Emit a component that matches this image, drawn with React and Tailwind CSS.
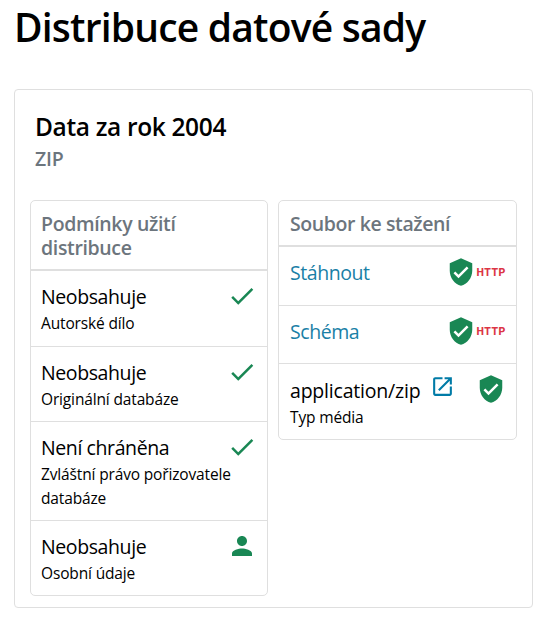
import React from "react";

const Check = () => (
  <svg viewBox="0 0 24 24" className="block size-[30px] shrink-0 fill-[#198754]">
    <path d="M9 16.17 4.83 12l-1.42 1.41L9 19 21 7l-1.41-1.41z" />
  </svg>
);

const Person = () => (
  <svg viewBox="0 0 24 24" className="block size-[30px] shrink-0 fill-[#198754]">
    <path d="M12 12c2.21 0 4-1.79 4-4s-1.79-4-4-4-4 1.79-4 4 1.79 4 4 4zm0 2c-2.67 0-8 1.34-8 4v2h16v-2c0-2.66-5.33-4-8-4z" />
  </svg>
);

const Shield = () => (
  <svg viewBox="0 0 24 24" className="block size-[30px] shrink-0 fill-[#198754]">
    <path d="M12 1 3 5v6c0 5.55 3.84 10.74 9 12 5.16-1.26 9-6.45 9-12V5l-9-4zm-2 16-4-4 1.41-1.41L10 14.17l6.59-6.59L18 9l-8 8z" />
  </svg>
);

const OpenInNew = () => (
  <svg viewBox="0 0 24 24" className="-mt-px block size-[25px] shrink-0 fill-[#007ba7]">
    <path d="M19 19H5V5h7V3H5c-1.11 0-2 .9-2 2v14c0 1.1.89 2 2 2h14c1.1 0 2-.9 2-2v-7h-2v7zM14 3v2h3.59l-9.83 9.83 1.41 1.41L19 6.41V10h2V3h-7z" />
  </svg>
);

const Http = () => (
  <span className="w-[30px] pl-[0.5px] font-['Roboto',sans-serif] text-[10.5px] leading-[31px] font-extrabold tracking-[0.5px] text-[#dc3545]">HTTP</span>
);

function Term({ value, valueClass, label, labelClass, icon, className }) {
  return (
    <div className={"flex justify-between border-t border-[#dfdfdf] px-[10px] pt-[10px] " + className}>
      <div className="whitespace-nowrap">
        <div className={"pt-px text-[19.5px] leading-[30px] " + valueClass}>{value}</div>
        <div className={"-mt-px text-[15.5px] leading-6 " + labelClass}>{label}</div>
      </div>
      <div className="-ml-20">{icon}</div>
    </div>
  );
}

function Download({ children, className }) {
  return (
    <div className={"flex justify-between border-[#dfdfdf] pr-[10px] pl-[11px] pt-[10px] " + className}>
      <span className="pt-px text-[19.5px] leading-[30px] tracking-[-0.45px] text-[#1980a6]">{children}</span>
      <div className="flex"><Shield /><Http /></div>
    </div>
  );
}

export default function App() {
  return (
    <main className="h-[621px] bg-white px-[14px] font-['Open_Sans',sans-serif] text-black">
      <h1 className="text-[39px] leading-[53px] font-semibold tracking-[-0.8px] whitespace-nowrap">Distribuce datové sady</h1>
      <section className="mt-[36px] h-[519px] w-[519px] rounded-[4px] border border-[#dfdfdf] px-[15px] pt-[22px]">
        <h2 className="pl-[5px] text-[24.5px] leading-[30px] font-semibold tracking-[-0.35px]">Data za rok 2004</h2>
        <p className="-mt-px pl-[5px] text-[19.5px] leading-[36px] font-semibold tracking-[-0.2px] text-[#6c757d]">ZIP</p>
        <div className="mt-[23px] flex items-start gap-[10px]">
          <div className="h-[396px] w-[238px] rounded-[5px] border border-[#dfdfdf]">
            <h3 className="h-[68px] px-[10px] pt-[11px] text-[19.5px] leading-6 font-semibold tracking-[-0.35px] text-[#6c757d]">Podmínky užití<br />distribuce</h3>
            <Term className="h-[77px] border-t-2" value="Neobsahuje" label="Autorské dílo" icon={<Check />} valueClass="tracking-[-0.4px]" labelClass="tracking-[-0.15px]" />
            <Term className="h-[75px]" value="Neobsahuje" label="Originální databáze" icon={<Check />} valueClass="tracking-[-0.4px]" labelClass="tracking-[-0.15px]" />
            <Term className="h-[99px]" value="Není chráněna" label={<>Zvláštní právo pořizovatele<br />databáze</>} icon={<Check />} valueClass="tracking-[-0.4px]" labelClass="tracking-[-0.15px]" />
            <Term className="h-[75px]" value="Neobsahuje" label="Osobní údaje" icon={<Person />} valueClass="tracking-[-0.4px]" labelClass="tracking-[-0.15px]" />
          </div>
          <div className="h-[240px] w-[239px] rounded-[5px] border border-[#dfdfdf]">
            <h3 className="h-[44px] pl-[11px] pt-[11px] text-[19.5px] leading-6 font-semibold tracking-[-0.4px] text-[#6c757d]">Soubor ke stažení</h3>
            <Download className="h-[60px] border-t-2">Stáhnout</Download>
            <Download className="h-[58px] border-t">Schéma</Download>
            <Term
              className="h-[76px]"
              value={<span className="flex"><span className="w-[141px] pt-px pl-px">application/zip</span><OpenInNew /></span>}
              label="Typ média"
              icon={<Shield />}
              valueClass="tracking-[-0.2px]"
              labelClass="pl-px tracking-[-0.15px]"
            />
          </div>
        </div>
      </section>
    </main>
  );
}
